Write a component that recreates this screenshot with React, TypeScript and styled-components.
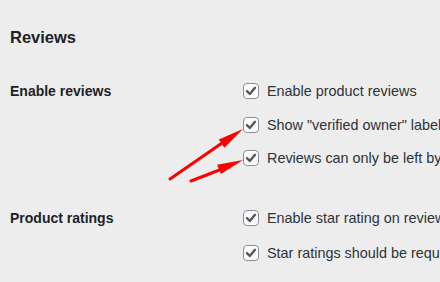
import React from "react";
import styled, { createGlobalStyle } from "styled-components";

const Global = createGlobalStyle`
  html, body {
    margin: 0;
    padding: 0;
    background: #ededed;
  }
  body {
    font-family: "Liberation Sans", Arial, sans-serif;
    color: #1d2327;
  }
`;

const Page = styled.div`
  position: relative;
  width: 440px;
  height: 282px;
  overflow: hidden;
  padding: 0 10px;
  box-sizing: border-box;
`;

const Title = styled.h2`
  margin: 0;
  padding-top: 26px;
  font-size: 16.5px;
  line-height: 22px;
  font-weight: 700;
`;

const Section = styled.div<{ $top: number }>`
  display: grid;
  grid-template-columns: 233px 1fr;
  margin-top: ${(p) => p.$top}px;
`;

const Label = styled.div`
  height: 16px;
  line-height: 16px;
  font-size: 14px;
  font-weight: 700;
  white-space: nowrap;
`;

const Options = styled.div<{ $gap: number }>`
  display: flex;
  flex-direction: column;
  gap: ${(p) => p.$gap}px;
`;

const Option = styled.label`
  display: flex;
  align-items: center;
  gap: 8px;
  height: 16px;
  font-size: 14.4px;
  white-space: nowrap;
  color: #2c3338;
`;

const Box = styled.span`
  flex: none;
  width: 16px;
  height: 16px;
  box-sizing: border-box;
  border: 1px solid #8c8f94;
  border-radius: 4px;
  background: #fbfbfb;
  display: flex;
  align-items: center;
  justify-content: center;
`;

const Overlay = styled.svg`
  position: absolute;
  left: 0;
  top: 0;
  pointer-events: none;
`;

const Check = () => (
  <Box>
    <svg width="12" height="12" viewBox="0 0 12 12">
      <path d="M2 6.2 L4.8 9 L10 2.8" fill="none" stroke="#50575e" strokeWidth="2.4" strokeLinecap="round" strokeLinejoin="round" />
    </svg>
  </Box>
);

const Row = ({ text }: { text: string }) => (
  <Option>
    <Check />
    <span>{text}</span>
  </Option>
);

export default function App() {
  return (
    <>
      <Global />
      <Page>
        <Title>Reviews</Title>
        <Section $top={35}>
          <Label>Enable reviews</Label>
          <Options $gap={17.5}>
            <Row text="Enable product reviews" />
            <Row text={'Show "verified owner" label on customer reviews'} />
            <Row text={'Reviews can only be left by "verified owners"'} />
          </Options>
        </Section>
        <Section $top={44}>
          <Label>Product ratings</Label>
          <Options $gap={19}>
            <Row text="Enable star rating on reviews" />
            <Row text="Star ratings should be required, not optional" />
          </Options>
        </Section>
        <Overlay width="440" height="282" viewBox="0 0 440 282">
          <line x1="170" y1="179" x2="225" y2="141" stroke="#ff0000" strokeWidth="3" strokeLinecap="round" />
          <polygon points="243,129 224.4,147.8 218.8,139.6" fill="#ff0000" />
          <line x1="191" y1="181" x2="222" y2="169" stroke="#ff0000" strokeWidth="3" strokeLinecap="round" />
          <polygon points="243,160 220.9,174 217.1,164.8" fill="#ff0000" />
        </Overlay>
      </Page>
    </>
  );
}
